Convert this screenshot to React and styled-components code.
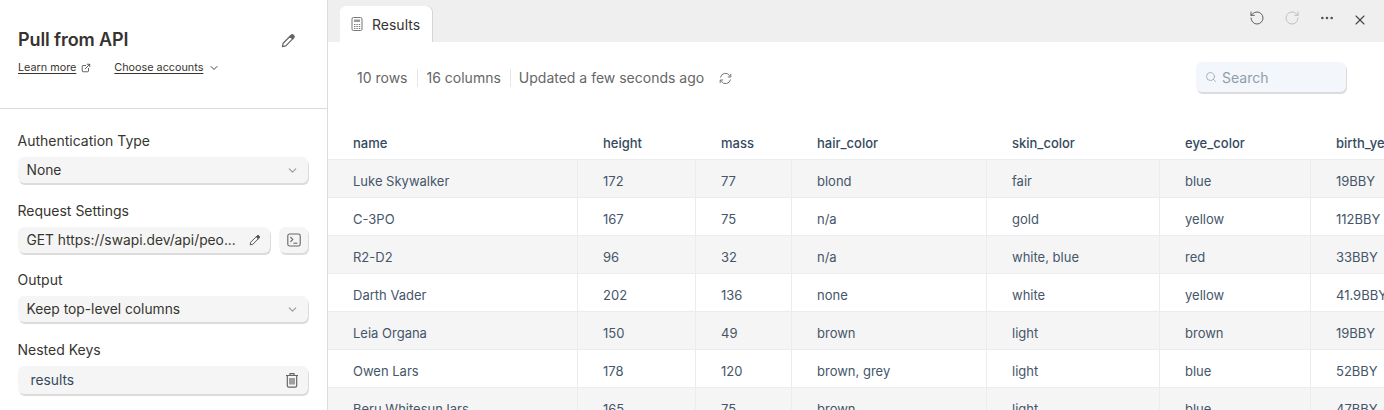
import React from "react";
import styled, { createGlobalStyle } from "styled-components";
import { ChevronDown, ExternalLink, RotateCcw, RotateCw, Ellipsis, X, Search } from "lucide-react";

const Global = createGlobalStyle`
  html, body { margin: 0; padding: 0; width: 1384px; height: 410px; overflow: hidden; background: #fff; }
  * { box-sizing: border-box; }
  body { font-family: Inter, "Liberation Sans", sans-serif; color: #37352f; }
`;

const PencilIcon = ({ size = 16, color = "#666" }) => (
  <svg width={size} height={size} viewBox="0 0 16 16" fill="none" stroke={color} strokeWidth="1.3" strokeLinejoin="round">
    <path d="M1.5 14.5l.8-3.6 7.4-7.4 2.8 2.8-7.4 7.4z" />
    <path d="M9.7 3.5l1.1-1.1a1.7 1.7 0 0 1 2.4 0l.4.4a1.7 1.7 0 0 1 0 2.4l-1.1 1.1z" fill={color} />
  </svg>
);
const CalcIcon = () => (
  <svg width="12" height="14" viewBox="0 0 12 14" fill="none" stroke="#777" strokeWidth="1">
    <rect x="1" y=".5" width="10" height="13" rx="1.5" />
    <rect x="3" y="2.5" width="6" height="2.5" fill="#999" stroke="none" />
    <path d="M3 7.5h1.4M5.4 7.5h1.4M7.8 7.5h1.4M3 9.5h1.4M5.4 9.5h1.4M7.8 9.5h1.4M3 11.5h1.4M5.4 11.5h1.4M7.8 11.5h1.4" />
  </svg>
);
const TrashIcon = () => (
  <svg width="14" height="16" viewBox="0 0 14 16" fill="none" stroke="#666" strokeWidth="1.2">
    <path d="M1 3.5h12M5 3.5V1.6h4v1.9" />
    <path d="M2.3 3.5v10.2a1.4 1.4 0 0 0 1.4 1.4h6.6a1.4 1.4 0 0 0 1.4-1.4V3.5" />
    <path d="M5 6v6.5M7 6v6.5M9 6v6.5" />
  </svg>
);
const TerminalIcon = () => (
  <svg width="14" height="14" viewBox="0 0 14 14" fill="none" stroke="#666" strokeWidth="1.1">
    <rect x=".8" y="1" width="12.4" height="12" rx="1.8" />
    <path d="M3.4 4l2.4 2.4-2.4 2.4" />
    <path d="M6.4 10.2h4" />
  </svg>
);
const SyncIcon = () => (
  <svg width="13" height="13" viewBox="0 0 13 13" fill="none" stroke="#777" strokeWidth="1">
    <path d="M1.5 5.5A5 5 0 0 1 10.6 3.6L11.6 5" />
    <path d="M11.8 1.8V5H8.8" />
    <path d="M11.5 7.5A5 5 0 0 1 2.4 9.4L1.4 8" />
    <path d="M1.2 11.2V8h3" />
  </svg>
);

const Page = styled.div`display: flex; width: 1384px; height: 410px; overflow: hidden;`;
const Sidebar = styled.aside`width: 328px; flex: none; height: 410px; border-right: 1px solid #dcdcdc; overflow: hidden;`;
const Head = styled.header`height: 109px; border-bottom: 1px solid #dcdcdc; padding: 29px 31px 0 18px;`;
const TitleRow = styled.div`display: flex; align-items: center; justify-content: space-between; height: 22px;`;
const Title = styled.h1`margin: 0; font-size: 18px; line-height: 22px; font-weight: 600; color: #37322f; letter-spacing: -0.1px;`;
const Links = styled.div`display: flex; align-items: center; margin-top: 7px; height: 20px;`;
const LinkText = styled.span`font-size: 10.8px; line-height: 14px; color: #37352f; text-decoration: underline; text-underline-offset: 2px; text-decoration-thickness: 1px;`;
const LinkGroup = styled.div`display: flex; align-items: center; gap: 5px; margin-right: 23px; svg { flex: none; }`;
const Form = styled.div`padding: 22px 19px 0 17.5px;`;
const Label = styled.div`font-size: 14px; line-height: 20px; color: #37352f; margin-bottom: 6px;`;
const Field = styled.div`
  display: flex; align-items: center; justify-content: space-between; height: ${p => p.$h ?? 26}px; background: #f5f5f5; border-radius: 6px;
  box-shadow: 1px 2px 0 #dcdcdc; padding: 0 9px; font-size: 13.8px; color: #37352f; flex: ${p => p.$grow ? 1 : "none"};
  min-width: 0; margin-bottom: ${p => p.$mb ?? 18}px; white-space: nowrap;
`;
const Row = styled.div`display: flex; gap: 9px;`;
const IconBtn = styled(Field)`width: 29px; padding: 0; justify-content: center;`;
const Tag = styled.span`color: #34495e; padding-left: 4px;`;
const Main = styled.main`flex: 1; min-width: 0; display: flex; flex-direction: column;`;
const TopBar = styled.div`height: 42px; background: #efefef; display: flex; justify-content: space-between; padding: 6px 16px 0 12px; flex: none;`;
const Tab = styled.div`
  width: 92px; height: 36px; background: #fff; border-radius: 6px 6px 0 0; box-shadow: 1px 0 0 #d6d6d6;
  display: flex; align-items: center; padding-left: 11px; gap: 9px; font-size: 14px; color: #37352f;
`;
const Actions = styled.div`display: flex; align-items: flex-start; padding-top: 4px; gap: 19px; svg:last-child { margin: 2px 0 0 -2px; }`;
const Toolbar = styled.div`height: 72px; display: flex; align-items: center; justify-content: space-between; padding: 0 38px 0 29px; flex: none;`;
const Stats = styled.div`display: flex; align-items: center; font-size: 14px; color: #666;`;
const Stat = styled.span`
  padding-right: 9px; margin-right: 9px; border-right: 1px solid #e6e6e6; line-height: 18px;
  &:nth-of-type(2) { margin-right: 8px; }
  &:last-of-type { border: 0; margin-right: 6px; }
`;
const SearchBox = styled.div`
  width: 150px; height: 30px; margin-top: -3px; padding-top: 1px; background: #f3f7fb; border-radius: 6px; box-shadow: 1px 2px 0 #dcdcdc;
  display: flex; align-items: center; padding-left: 9px; gap: 5px; color: #8f9dab; font-size: 14px;
`;
const Grid = styled.div`
  display: grid; grid-template-columns: 249px 118px 96px 195px 173px 151px 200px; flex: none;
`;
const HeadCell = styled.div`
  height: 46px; padding: 20px 0 0 ${p => p.$first ? 25 : 26}px; font-size: 13px; line-height: 18px; font-weight: 500; color: #34495e;
  border-bottom: 1px solid #e9edf0; white-space: nowrap;
`;
const Cell = styled.div`
  height: 38px; padding: 12px 0 0 25px; line-height: 18px; font-size: 13px; color: #45566a;
  background: ${p => p.$odd ? "#f5f5f5" : "#fff"}; border-bottom: 1px solid #e9edf0; white-space: nowrap;
  border-left: ${p => p.$first ? 0 : "1px solid #e9edf0"};
`;

const cols = ["name", "height", "mass", "hair_color", "skin_color", "eye_color", "birth_year"];
const rows = [
  ["Luke Skywalker", "172", "77", "blond", "fair", "blue", "19BBY"],
  ["C-3PO", "167", "75", "n/a", "gold", "yellow", "112BBY"],
  ["R2-D2", "96", "32", "n/a", "white, blue", "red", "33BBY"],
  ["Darth Vader", "202", "136", "none", "white", "yellow", "41.9BBY"],
  ["Leia Organa", "150", "49", "brown", "light", "brown", "19BBY"],
  ["Owen Lars", "178", "120", "brown, grey", "light", "blue", "52BBY"],
  ["Beru Whitesun lars", "165", "75", "brown", "light", "blue", "47BBY"],
];

export default function App() {
  return (
    <Page>
      <Global />
      <Sidebar>
        <Head>
          <TitleRow>
            <Title>Pull from API</Title>
            <PencilIcon size={15} />
          </TitleRow>
          <Links>
            <LinkGroup><LinkText>Learn more</LinkText><ExternalLink size={10} color="#444" /></LinkGroup>
            <LinkGroup><LinkText>Choose accounts</LinkText><ChevronDown size={12} color="#444" /></LinkGroup>
          </Links>
        </Head>
        <Form>
          <Label>Authentication Type</Label>
          <Field>None<ChevronDown size={13} color="#999" /></Field>
          <Label>Request Settings</Label>
          <Row>
            <Field $grow $mb={17}>GET https://swapi.dev/api/peo...<PencilIcon size={12} color="#555" /></Field>
            <IconBtn $mb={17}><TerminalIcon /></IconBtn>
          </Row>
          <Label>Output</Label>
          <Field>Keep top-level columns<ChevronDown size={13} color="#999" /></Field>
          <Label>Nested Keys</Label>
          <Field $h={28} $mb={0}><Tag>results</Tag><TrashIcon /></Field>
        </Form>
      </Sidebar>
      <Main>
        <TopBar>
          <Tab><CalcIcon />Results</Tab>
          <Actions>
            <RotateCcw size={16} color="#555" strokeWidth={1.4} />
            <RotateCw size={16} color="#bbb" strokeWidth={1.4} />
            <Ellipsis size={16} color="#555" />
            <X size={16} color="#444" strokeWidth={1.6} />
          </Actions>
        </TopBar>
        <Toolbar>
          <Stats>
            <Stat>10 rows</Stat><Stat>16 columns</Stat><Stat>Updated a few seconds ago</Stat>
            <SyncIcon />
          </Stats>
          <SearchBox><Search size={12} color="#8f9dab" strokeWidth={1.5} />Search</SearchBox>
        </Toolbar>
        <Grid>
          {cols.map((c, j) => <HeadCell key={c} $first={j === 0}>{c}</HeadCell>)}
          {rows.map((r, i) => r.map((v, j) => <Cell key={j} $odd={i % 2 === 0} $first={j === 0}>{v}</Cell>))}
        </Grid>
      </Main>
    </Page>
  );
}
